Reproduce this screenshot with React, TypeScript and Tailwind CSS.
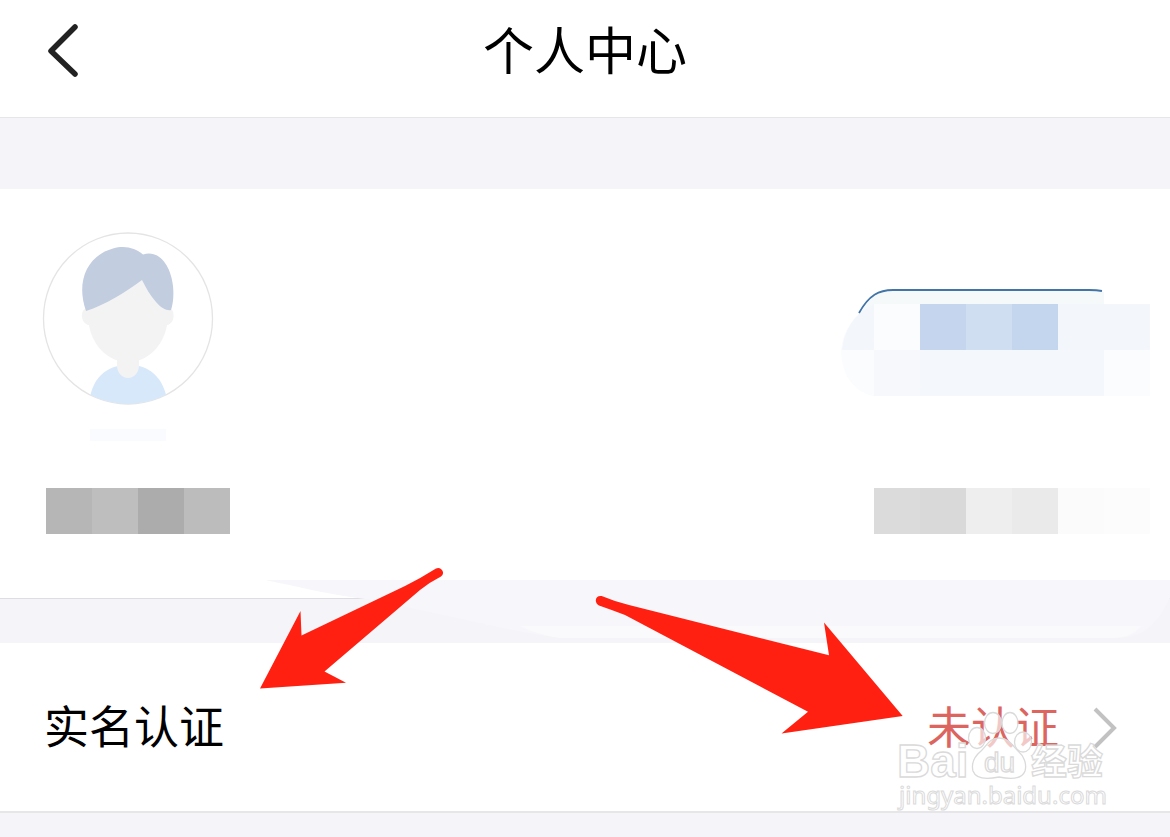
type BlockRowProps = {
  blocks: string[]
  label: string
}

const nameBlocks = ["bg-[#b6b6b6]", "bg-[#bebebe]", "bg-[#acacac]", "bg-[#bcbcbc]"]

const phoneBlocks = [
  "bg-[#dbdbdb]",
  "bg-[#d9d9d9]",
  "bg-[#eeeeee]",
  "bg-[#eaeaea]",
  "bg-[#fbfbfb]",
  "bg-[#fcfcfc]",
]

function BlockRow({ blocks, label }: BlockRowProps) {
  return (
    <div className="flex" role="img" aria-label={label}>
      {blocks.map((color, i) => (
        <span key={i} className={`size-[46px] ${color}`} />
      ))}
    </div>
  )
}

function Avatar() {
  return (
    <svg viewBox="0 0 172 174" className="h-[174px] w-[172px]" aria-hidden="true">
      <defs>
        <clipPath id="avatar-clip">
          <ellipse cx="86" cy="87" rx="84" ry="86" />
        </clipPath>
      </defs>
      <ellipse cx="86" cy="87.5" rx="84.5" ry="85.5" fill="#fff" stroke="#e4e4e4" strokeWidth="1.3" />
      <g clipPath="url(#avatar-clip)">
        <path d="M47 176 C48 152 59 139 76 135 H97 C113 139 124 152 126 176 Z" fill="#d7e8fa" />
      </g>
      <path d="M75 120 H97 V135 C96 151 76 151 75 135 Z" fill="#f3f3f4" />
      <path
        d="M43 78 C38 80 39 93 47 94 C50 113 65 131 86 131 C107 131 122 113 125 94 C133 93 133 80 129 78 L110 46 H60 Z"
        fill="#f3f3f4"
      />
      <path
        d="M44 80 C34 52 44 25 71 17.500 C83 14 93 17 101 23.500 C117 18 129 35 131 55 C132 65 131 73 129 79 C125 80 119 77 114 71 C108 64 104 57 100 49 C84 61 63 74 44 80 Z"
        fill="#c2cddf"
      />
    </svg>
  )
}

function Badge() {
  return (
    <svg viewBox="0 0 309 108" className="h-[108px] w-[309px]" aria-hidden="true">
      <path d="M32 14 C40 6 46 2 56 2 H262 V15 H309 V107 H32 C10 102 0 82 0 61 C2 42 12 26 32 14 Z" fill="#fbfcfe" />
      <path d="M19 25 C30 6 40 2 52 2 H258 L263 3 V15 H33 Z" fill="#f6f9fa" />
      <path d="M1 61 C2 46 10 32 18 25 L33 15 V61 Z" fill="#f3f7fb" />
      <path d="M33 15 H79 V61 H33 Z" fill="#fbfcfe" />
      <path d="M33 61 H79 V107 H33 Z" fill="#f6f8fc" />
      <path d="M79 61 H263 V107 H79 Z" fill="#f4f8fd" />
      <path d="M217 15 H309 V61 H217 Z" fill="#f3f7fb" />
      <path d="M79 15 H125 V61 H79 Z" fill="#c5d5ee" />
      <path d="M125 15 H171 V61 H125 Z" fill="#cfdef0" />
      <path d="M171 15 H217 V61 H171 Z" fill="#c4d5ee" />
      <path d="M18 24 C28 6 38 1 52 1 H248 Q256 1 261 2" fill="none" stroke="#4274a8" strokeWidth="1.8" />
    </svg>
  )
}

function Watermark() {
  return (
    <svg
      viewBox="0 0 216 108"
      className="pointer-events-none absolute right-[60px] top-[62px] h-[108px] w-[216px]"
      fill="#fff"
      fillOpacity="0.65"
      stroke="#dadada"
      strokeWidth="1.3"
      aria-hidden="true"
    >
      <text x="3" y="72" fontSize="46" fontWeight="700" fontFamily="'Liberation Sans', sans-serif">
        Bai
      </text>
      <ellipse cx="83" cy="33" rx="8.5" ry="10.5" />
      <ellipse cx="99" cy="18" rx="8.5" ry="10.5" />
      <ellipse cx="116" cy="18" rx="8" ry="10.5" />
      <ellipse cx="129" cy="37" rx="8.5" ry="10" />
      <path d="M105 33 C115 33 118 40 124 46 C130 51 133 59 131 66 C128 74 119 75 105 72 C91 75 82 74 79 66 C77 58 81 51 87 46 C93 40 96 33 105 33 Z" />
      <text x="90" y="67" fontSize="28" fontFamily="'Liberation Sans', sans-serif">
        du
      </text>
      <text x="137" y="70" fontSize="36" fontWeight="700" fontFamily="'Noto Sans CJK SC', sans-serif">
        经验
      </text>
      <text x="5" y="99" fontSize="24" strokeWidth="1" fontFamily="'Noto Sans', sans-serif">
        jingyan.baidu.com
      </text>
    </svg>
  )
}

export default function App() {
  return (
    <div className="min-h-screen overflow-x-hidden bg-[#f4f4f9] font-['Noto_Sans_CJK_SC',sans-serif] text-black">
      <header className="grid grid-cols-[1fr_auto_1fr] items-center border-b border-[#e6e6e8] bg-white px-[44px] pb-[21px]">
        <button type="button" aria-label="返回" className="w-10">
          <svg viewBox="0 0 40 62" className="h-[62px] w-10" aria-hidden="true">
            <path
              d="M31 10 L7 34 L31 57"
              fill="none"
              stroke="#222"
              strokeWidth="5.5"
              strokeLinecap="round"
              strokeLinejoin="round"
            />
          </svg>
        </button>
        <h1 className="text-[51px] leading-[96px]">个人中心</h1>
      </header>

      {/* Profile */}
      <section className="mt-[71px] border-b border-[#dedee2] bg-white pb-16 pl-[42px] pr-5 pt-[42px]">
        <div className="flex items-end justify-between">
          <Avatar />
          <div className="pb-2">
            <Badge />
          </div>
        </div>
        <div className="ml-12 mt-6 h-3 w-[76px] bg-[#fafbfe]" />
        <div className="mt-[47px] flex justify-between pl-1">
          <BlockRow blocks={nameBlocks} label="姓名" />
          <BlockRow blocks={phoneBlocks} label="手机号" />
        </div>
      </section>

      {/* Verification */}
      <section className="relative mt-11 border-b-2 border-[#e6e6e8] bg-white">
        <svg
          viewBox="0 0 1170 63"
          preserveAspectRatio="none"
          className="absolute -top-[63px] left-0 h-[63px] w-full"
          aria-hidden="true"
        >
          <path d="M265 0 H1170 V18 C1158 40 1148 58 1115 58 H560 C500 50 430 30 365 19 C330 15 300 7 265 0 Z" fill="#f7f7fb" />
          <path d="M520 46 H1142 C1134 54 1126 58 1112 58 H560 Q535 54 520 46 Z" fill="#fafafc" />
        </svg>

        <a href="#verify" className="flex items-center justify-between pb-[50px] pl-[44px] pr-[52px] pt-[46px] text-[45px] leading-[72px]">
          <span>实名认证</span>
          <span className="flex items-center gap-[33px] text-[44px] text-[#dc6560]">
            未认证
            <svg viewBox="0 0 26 50" className="h-[50px] w-[26px]" aria-hidden="true">
              <path d="M3 9 L22 28 L3 47" fill="none" stroke="#c2c2c2" strokeWidth="4" />
            </svg>
          </span>
        </a>

        <svg
          viewBox="0 0 190 128"
          className="pointer-events-none absolute -top-[79px] left-[256px] h-32 w-[190px]"
          aria-hidden="true"
        >
          <path
            d="M4 124.5 L44.5 47 L45.5 71.5 L149 22 Q165 14 180 4.5 C185 2 190 9 185 12.5 Q174 18 164 26 L68.5 107.5 L90 118.7 Z"
            fill="#ff2011"
          />
        </svg>
        <svg
          viewBox="0 0 312 144"
          className="pointer-events-none absolute -top-[51px] right-[264px] h-36 w-[312px]"
          aria-hidden="true"
        >
          <path
            d="M9 4.500 C2 2 -1 10 5 13.500 Q18 18 31 23 L214 119.700 L187.500 141.500 L308.700 124 L230 30.500 L235 63.300 L35 13 Q22 10 9 4.500 Z"
            fill="#ff2011"
          />
        </svg>
        <Watermark />
      </section>
    </div>
  )
}
